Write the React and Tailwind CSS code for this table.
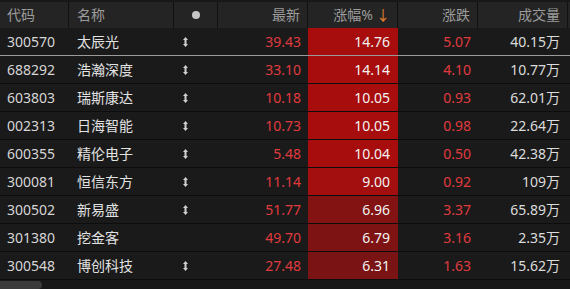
import React from 'react';

const rows = [
  { code: '300570', name: '太辰光', flag: true, price: '39.43', pct: '14.76', chg: '5.07', vol: '40.15万', bg: 'bg-[#a80d0d]', selected: true },
  { code: '688292', name: '浩瀚深度', flag: true, price: '33.10', pct: '14.14', chg: '4.10', vol: '10.77万', bg: 'bg-[#a80d0d]' },
  { code: '603803', name: '瑞斯康达', flag: true, price: '10.18', pct: '10.05', chg: '0.93', vol: '62.01万', bg: 'bg-[#a80d0d]' },
  { code: '002313', name: '日海智能', flag: true, price: '10.73', pct: '10.05', chg: '0.98', vol: '22.64万', bg: 'bg-[#a80d0d]' },
  { code: '600355', name: '精伦电子', flag: true, price: '5.48', pct: '10.04', chg: '0.50', vol: '42.38万', bg: 'bg-[#a80d0d]' },
  { code: '300081', name: '恒信东方', flag: true, price: '11.14', pct: '9.00', chg: '0.92', vol: '109万', bg: 'bg-[#a30e0e]' },
  { code: '300502', name: '新易盛', flag: true, price: '51.77', pct: '6.96', chg: '3.37', vol: '65.89万', bg: 'bg-[#831313]' },
  { code: '301380', name: '挖金客', flag: false, price: '49.70', pct: '6.79', chg: '3.16', vol: '2.35万', bg: 'bg-[#7e1313]' },
  { code: '300548', name: '博创科技', flag: true, price: '27.48', pct: '6.31', chg: '1.63', vol: '15.62万', bg: 'bg-[#7a1414]' },
];

const cols = 'grid grid-cols-[69px_105px_44px_90px_90px_80px_90px]';

const UpDown = () => (
  <svg width="5" height="10" viewBox="0 0 5 10" className="text-[#cfcfcf]">
    <path d="M2.5 0 L5 3 L3.5 3 L3.5 7 L5 7 L2.5 10 L0 7 L1.5 7 L1.5 3 L0 3 Z" fill="currentColor" />
  </svg>
);

const App = () => {
  return (
    <div
      className="w-[570px] h-[289px] bg-[#181818] pt-[2px] overflow-hidden relative text-[14px]"
      style={{ fontFamily: '"Noto Sans", "Noto Sans CJK SC", sans-serif' }}
    >
      <div className={`${cols} h-[26px] bg-[#242424] text-[#9c9c9c] leading-[26px]`}>
        <div className="border-r border-[#111] pl-[7px]">代码</div>
        <div className="border-r border-[#111] pl-[8px]">名称</div>
        <div className="border-r border-[#111] flex items-center justify-center">
          <span className="w-[8px] h-[8px] rounded-full bg-[#c4c4c4]" />
        </div>
        <div className="border-r border-[#111] text-right pr-[7px]">最新</div>
        <div className="border-r border-[#111] text-right pr-[7px]">
          涨幅%<span className="text-[#e8832c] ml-[3px]">↓</span>
        </div>
        <div className="border-r border-[#111] text-right pr-[7px]">涨跌</div>
        <div className="border-r border-[#111] text-right pr-[7px]">成交量</div>
      </div>

      {rows.map((r) => (
        <div
          key={r.code}
          className={`${cols} h-[28px] leading-[27px] border-b ${r.selected ? 'border-[#9a9a9a]' : 'border-[#0d0d0d]'} bg-[#1a1a1a]`}
        >
          <div className="pl-[7px] text-[#d6d6d6]">{r.code}</div>
          <div className="pl-[8px] text-[#e2e2e2]">{r.name}</div>
          <div className="flex items-center pl-[9px]">{r.flag && <UpDown />}</div>
          <div className="text-right pr-[7px] text-[#e03a3e]">{r.price}</div>
          <div className={`text-right pr-[8px] text-[#f2f2f2] ${r.bg}`}>{r.pct}</div>
          <div className="text-right pr-[7px] text-[#e03a3e]">{r.chg}</div>
          <div className="text-right pr-[8px] text-[#dcdcdc]">{r.vol}</div>
        </div>
      ))}

      <div className="absolute left-0 bottom-0 w-[42px] h-[8px] rounded-r-[4px] bg-[#3a3a3a]" />
    </div>
  );
};

export default App;
